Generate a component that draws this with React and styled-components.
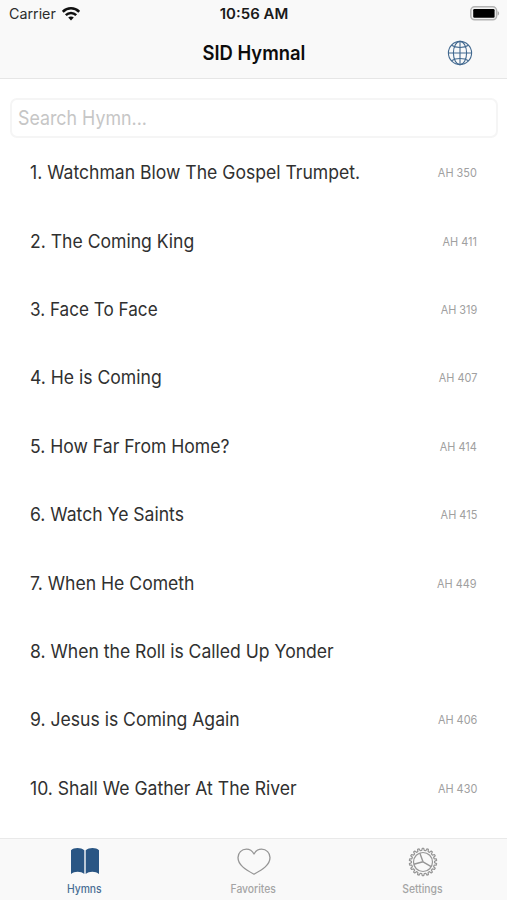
import React, { Component } from 'react';
import styled, { createGlobalStyle } from 'styled-components';

const GlobalStyle = createGlobalStyle`
  body {
    margin: 0;
    background: #fff;
    font-family: Inter, "Liberation Sans", sans-serif;
  }
  * {
    box-sizing: border-box;
  }
`
const Screen = styled.div`
  display: flex;
  flex-direction: column;
  height: 900px;
  width: 507px;
  overflow: hidden;
`
const Header = styled.header`
  height: 79px;
  background: #f9f9f9;
  border-bottom: 1px solid #e6e6e6;
`
const StatusBar = styled.div`
  display: grid;
  grid-template-columns: 1fr auto 1fr;
  align-items: center;
  height: 27px;
  padding: 0 7px 0 9px;
`
const StatusSide = styled.div`
  display: flex;
  align-items: center;
  gap: 7px;
  justify-content: ${props => props.$end ? 'flex-end' : 'flex-start'};
`
const TitleBar = styled.div`
  display: grid;
  grid-template-columns: 1fr auto 1fr;
  align-items: center;
  height: 51px;
  padding: 0 34px;
`
const GlobeBtn = styled.button`
  grid-column: 3;
  justify-self: end;
  display: flex;
  padding: 0;
  border: 0;
  background: none;
`
/* condensed text, $x is the horizontal scale */
const Text = styled.span`
  display: inline-block;
  white-space: nowrap;
  transform: scaleX(${props => props.$x || 1});
  transform-origin: ${props => props.$origin || 'left'} center;
`
const Carrier = styled(Text)`
  font-size: 14px;
  color: #2c2c2c;
`
const Clock = styled(Text)`
  font-size: 14px;
  font-weight: 600;
  color: #1a1a1a;
`
const Title = styled(Text)`
  grid-column: 2;
  font-size: 20px;
  font-weight: 600;
  color: #0c0c0c;
`
const SearchBox = styled.div`
  display: flex;
  align-items: center;
  flex: none;
  height: 40px;
  margin: 19px 9px 0 10px;
  padding-left: 6px;
  border: 2px solid #f5f5f5;
  border-radius: 7px;
  overflow: hidden;
`
const SearchInput = styled.input`
  width: 100%;
  padding: 0;
  border: 0;
  outline: 0;
  background: none;
  font-family: inherit;
  font-size: 20px;
  transform: scaleX(0.89);
  transform-origin: left center;
  &::placeholder {
    color: #c6c6c6;
    opacity: 1;
  }
`
const HymnList = styled.ul`
  flex: 1;
  margin: 0;
  padding: 0 30px;
  list-style: none;
`
const HymnRow = styled.li`
  display: flex;
  justify-content: space-between;
  align-items: center;
  height: 68.4px;
`
const HymnName = styled(Text)`
  font-size: 18.5px;
  color: #303030;
`
const HymnCode = styled(Text)`
  padding-top: 1px;
  font-size: 12px;
  color: #a0a0a0;
`
const TabBar = styled.nav`
  display: grid;
  grid-template-columns: repeat(3, 1fr);
  height: 62px;
  background: #f9f9f9;
  border-top: 1px solid #e9e9e9;
`
const Tab = styled.a`
  display: flex;
  flex-direction: column;
  align-items: center;
  padding-top: 8px;
  color: ${props => props.$active ? '#2a5684' : '#969696'};
`
const TabLabel = styled(Text)`
  margin-top: 5px;
  font-size: 11.5px;
  line-height: 15px;
  font-weight: 500;
  opacity: 0.85;
`

const hymns = [
  { name: '1. Watchman Blow The Gospel Trumpet.', code: 'AH 350' },
  { name: '2. The Coming King', code: 'AH 411' },
  { name: '3. Face To Face', code: 'AH 319', scale: 0.925 },
  { name: '4. He is Coming', code: 'AH 407' },
  { name: '5. How Far From Home?', code: 'AH 414' },
  { name: '6. Watch Ye Saints', code: 'AH 415' },
  { name: '7. When He Cometh', code: 'AH 449' },
  { name: '8. When the Roll is Called Up Yonder', code: '' },
  { name: '9. Jesus is Coming Again', code: 'AH 406' },
  { name: '10. Shall We Gather At The River', code: 'AH 430' },
];

const WifiIcon = () => (
  <svg width="18" height="14" viewBox="0 0 18 14" fill="none" stroke="#111" strokeWidth="2.5">
    <path d="M0.8 4.8C5.3 0.2 12.7 0.2 17.2 4.8" />
    <path d="M3.8 8.2C6.8 5.3 11.2 5.3 14.2 8.2" />
    <path d="M9 13.4L6.2 10.6C7.8 9.1 10.2 9.1 11.8 10.6Z" fill="#111" stroke="none" />
  </svg>
);

const BatteryIcon = () => (
  <svg width="30" height="15" viewBox="0 0 30 15">
    <rect x="0.8" y="0.8" width="25.8" height="13" rx="3.8" fill="#f2f2f2" stroke="#b3b3b3" strokeWidth="1.5" />
    <rect x="3.2" y="3" width="21.4" height="8.8" rx="1.2" fill="#000" />
    <path d="M27.6 5C29.6 5.8 29.6 8.8 27.6 9.6Z" fill="#aaa" />
  </svg>
);

const GlobeIcon = () => (
  <svg width="26" height="26" viewBox="0 0 26 26" fill="none" stroke="#41688f" strokeWidth="1.1">
    <circle cx="13" cy="13" r="11.6" />
    <ellipse cx="13" cy="13" rx="6.6" ry="11.6" />
    <path d="M13 1.4V24.6M1.4 13H24.6" />
    <path d="M4.4 5.2C9 8.2 17 8.2 21.6 5.2M4.4 20.8C9 17.8 17 17.8 21.6 20.8" />
  </svg>
);

const BookIcon = () => (
  <svg width="30" height="30" viewBox="0 0 30 30" fill="#2a5684">
    <path d="M1 3.3C3.8 0.3 10.8 0.2 14.3 3.2V27C11 24 4.6 23.8 1 27Z" />
    <path d="M15.7 3.2C19.2 0.2 26.2 0.3 29 3.3V27C25.4 23.8 19 24 15.7 27Z" />
  </svg>
);

const HeartIcon = () => (
  <svg width="34" height="30" viewBox="0 0 34 30" fill="none" stroke="#969696" strokeWidth="1.3" strokeLinejoin="round">
    <path d="M17 7C15.2 3.8 12.5 2.2 9.4 2.2C4.6 2.2 1 5.8 1 10.5C1 17.9 8.3 22.5 17 27.2C25.7 22.5 33 17.9 33 10.5C33 5.8 29.4 2.2 24.6 2.2C21.5 2.2 18.8 3.8 17 7Z" />
  </svg>
);

const teeth = 18;
const gearPath = Array.from({ length: teeth }, (_, i) => {
  const step = (Math.PI * 2) / teeth;
  const point = (r, a) => `${(15 + r * Math.sin(a)).toFixed(2)} ${(15 - r * Math.cos(a)).toFixed(2)}`;
  const a = i * step;
  return [
    point(11.6, a - step * 0.3),
    point(13.7, a - step * 0.16),
    point(13.7, a + step * 0.16),
    point(11.6, a + step * 0.3),
  ].join('L');
}).join('L');

const GearIcon = () => (
  <svg width="30" height="30" viewBox="0 0 30 30" fill="none" stroke="#969696" strokeWidth="1.2">
    <path d={`M${gearPath}Z`} strokeLinejoin="round" />
    <circle cx="15" cy="15" r="9.5" />
    <path d="M15 14.8L11.8 6.1M15 14.8L23.2 19.6M15 14.8L5.8 17.2" strokeWidth="1.4" />
  </svg>
);

class App extends Component {
  render() {
    return (
      <Screen>
        <GlobalStyle />
        <Header>
          <StatusBar>
            <StatusSide>
              <Carrier $x={1.02}>Carrier</Carrier>
              <WifiIcon />
            </StatusSide>
            <Clock $x={1.07} $origin='center'>10:56 AM</Clock>
            <StatusSide $end>
              <BatteryIcon />
            </StatusSide>
          </StatusBar>
          <TitleBar>
            <Title $x={0.92} $origin='center'>SID Hymnal</Title>
            <GlobeBtn aria-label='Language'><GlobeIcon /></GlobeBtn>
          </TitleBar>
        </Header>
        <SearchBox>
          <SearchInput placeholder='Search Hymn...' />
        </SearchBox>
        <HymnList>
          {hymns.map(hymn => (
            <HymnRow key={hymn.name}>
              <HymnName $x={hymn.scale || 0.95}>{hymn.name}</HymnName>
              <HymnCode $x={0.91} $origin='right'>{hymn.code}</HymnCode>
            </HymnRow>
          ))}
        </HymnList>
        <TabBar>
          <Tab $active>
            <BookIcon />
            <TabLabel $x={0.9} $origin='center'>Hymns</TabLabel>
          </Tab>
          <Tab>
            <HeartIcon />
            <TabLabel $x={0.9} $origin='center'>Favorites</TabLabel>
          </Tab>
          <Tab>
            <GearIcon />
            <TabLabel $x={0.9} $origin='center'>Settings</TabLabel>
          </Tab>
        </TabBar>
      </Screen>
    );
  }
}

export default App;
